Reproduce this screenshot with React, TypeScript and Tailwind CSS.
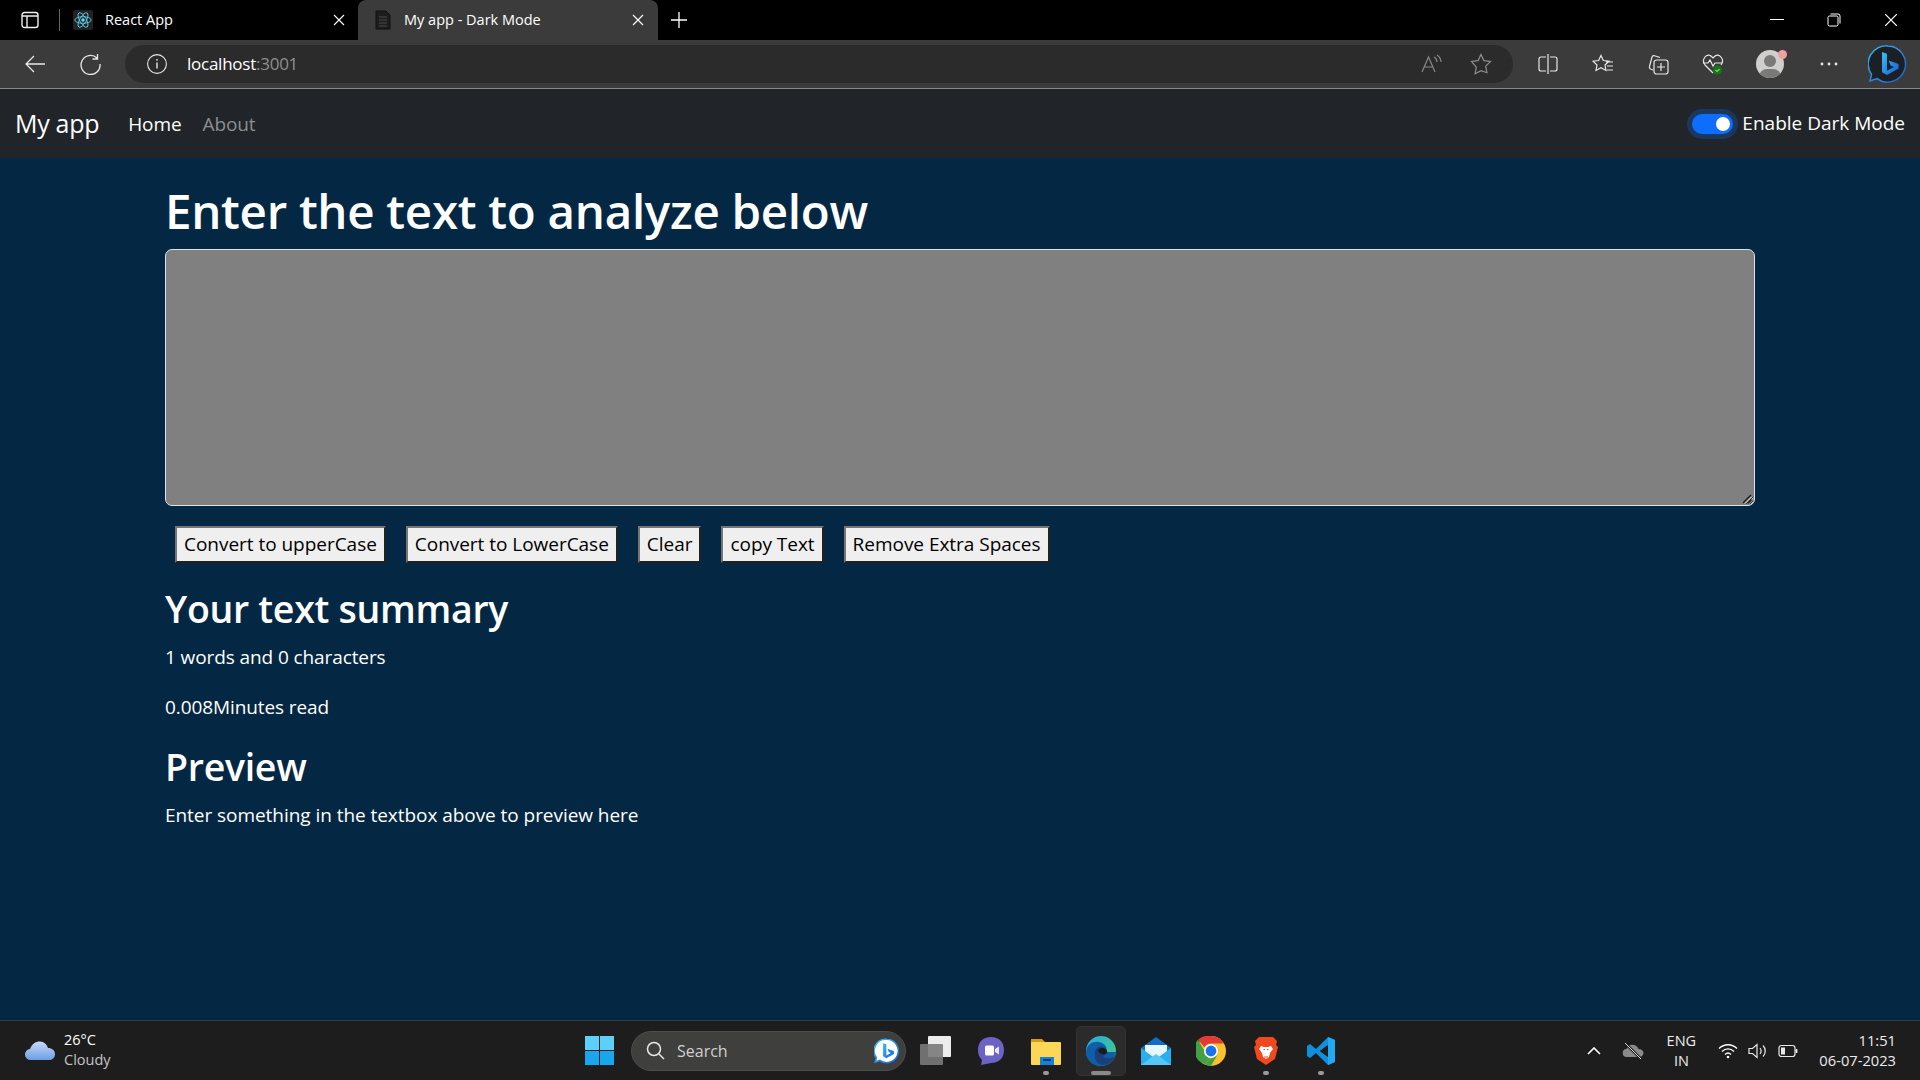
import React from 'react';

const font = "font-['Open_Sans','Noto_Sans',sans-serif]";

const CloseIcon = ({ size = 12 }: { size?: number }) => (
  <svg width={size} height={size} viewBox="0 0 12 12" stroke="#fff" strokeWidth="1.1" fill="none">
    <path d="M1 1l10 10M11 1L1 11" />
  </svg>
);

const ReactFavicon = () => (
  <div className="w-5 h-5 bg-[#222] rounded-[2px] flex items-center justify-center">
    <svg width="20" height="20" viewBox="-11 -11 22 22" fill="none" stroke="#61dafb" strokeWidth="0.9">
      <circle r="1.9" fill="#61dafb" stroke="none" />
      <ellipse rx="9" ry="3.6" />
      <ellipse rx="9" ry="3.6" transform="rotate(60)" />
      <ellipse rx="9" ry="3.6" transform="rotate(120)" />
    </svg>
  </div>
);

const DocIcon = () => (
  <svg width="16" height="20" viewBox="0 0 16 20" fill="#1d1d1d" stroke="#111" strokeWidth="1">
    <path d="M1 1h10l4 4v14H1z" />
    <path d="M4 7h8M4 10h8M4 13h8M4 16h8" stroke="#4b4b4b" />
  </svg>
);

const Toolbar = ({ children, w, c = '#e6e6e6' }: { children: React.ReactNode; w: number; c?: string }) => (
  <div className="flex items-center justify-center shrink-0" style={{ width: w, color: c }}>
    {children}
  </div>
);

const BingLogo = ({ size = 40, light = false }: { size?: number; light?: boolean }) => (
  <svg width={size} height={size} viewBox="0 0 40 40" fill="none">
    <defs>
      <linearGradient id="bb" x1="0" y1="0" x2="1" y2="1">
        <stop offset="0" stopColor="#37bdf8" />
        <stop offset="1" stopColor="#1a5fd6" />
      </linearGradient>
    </defs>
    <path
      d="M20 2a18 18 0 1 1-11 32.6L2 37l1.6-6.5A18 18 0 0 1 20 2z"
      fill={light ? '#fff' : '#1c1f24'}
      stroke="url(#bb)"
      strokeWidth={light ? 2.5 : 1.4}
    />
    <path d="M14 8l5 1.8v17l6.8-3.9-3.2-1.5-2-5 10 3.500v4.600L19 31l-5-2.800z" fill="url(#bb)" />
  </svg>
);

const Teams = () => (
  <svg width="30" height="30" viewBox="0 0 30 30">
    <path d="M15 1c8 0 13 5 13 13 0 8-5 13-13 13l-10 2 1-5C3 21 2 18 2 14 2 6 7 1 15 1z" fill="#6d63c6" />
    <rect x="9" y="9.5" width="9" height="10" rx="1.5" fill="#fff" />
    <path d="M19 13l4-2.5v8L19 16z" fill="#e9e6ff" />
  </svg>
);

const Explorer = () => (
  <svg width="32" height="30" viewBox="0 0 32 30">
    <path d="M1 3h11l3 3v4H1z" fill="#d99a14" />
    <rect x="1" y="6" width="30" height="23" rx="1" fill="#fcd757" />
    <rect x="10" y="21" width="14" height="8" fill="#1681d8" />
    <rect x="13" y="23" width="8" height="2" fill="#063f78" />
  </svg>
);

const Edge = () => (
  <svg width="32" height="32" viewBox="0 0 32 32">
    <defs>
      <linearGradient id="eg" x1="0" y1="0" x2="1" y2="1">
        <stop offset="0" stopColor="#2aa9e0" />
        <stop offset="1" stopColor="#43d27a" />
      </linearGradient>
    </defs>
    <circle cx="16" cy="16" r="15" fill="url(#eg)" />
    <path d="M1 17C2 8 9 6 14 7c6 1 9 6 7 10h10c-1 8-7 14-15 14C8 31 1 25 1 17z" fill="#0f5fa8" />
    <path d="M10 18c0-5 4-7 8-6s5 5 3 7-3 2-3 2c3 3 8 3 12 0-2 6-7 9-12 9-6 0-9-6-8-12z" fill="#1b3f7a" />
    <path d="M14 14c3-2 7-1 8 2 1 2-2 4-5 3-3-1-5-3-3-5z" fill="#1a1a1a" />
  </svg>
);

const Mail = () => (
  <svg width="30" height="30" viewBox="0 0 30 30">
    <path d="M15 1L0 12v17h30V12z" fill="#0f6fc6" />
    <path d="M4 9h22v12H4z" fill="#e8f6ff" />
    <path d="M0 12l15 11 15-11v17H0z" fill="#29b0ec" />
    <path d="M0 29l15-11 15 11z" fill="#57c8f5" />
  </svg>
);

const Chrome = () => (
  <svg width="30" height="30" viewBox="0 0 30 30">
    <circle cx="15" cy="15" r="15" fill="#fbc02d" />
    <path d="M15 0a15 15 0 0 1 13 7.5H15a7.5 7.5 0 0 0-6.5 3.75L2 3.8A15 15 0 0 1 15 0z" fill="#e53935" />
    <path d="M2 3.8l6.5 11.2A7.5 7.5 0 0 0 15 22.5L8.5 28.1A15 15 0 0 1 2 3.8z" fill="#43a047" />
    <path d="M8.5 28.1L15 22.5l6.5-3.75L15 30a15 15 0 0 1-6.5-1.9z" fill="#43a047" />
    <circle cx="15" cy="15" r="7" fill="#fff" />
    <circle cx="15" cy="15" r="5.4" fill="#1a73e8" />
  </svg>
);

const Brave = () => (
  <svg width="26" height="30" viewBox="0 0 26 30">
    <path d="M6 1h14l4 4-1 4 2 2-3 12-9 6-9-6L1 11l2-2-1-4z" fill="#f1491f" />
    <path d="M8 10l3 1h4l3-1 2 3-3 4-1 4-3 2-3-2-1-4-3-4z" fill="#fff" />
    <path d="M10.5 13.5h1.5M14 13.5h1.5M11 21h4" stroke="#f1491f" strokeWidth="1.2" />
  </svg>
);

const VSCode = () => (
  <svg width="30" height="30" viewBox="0 0 30 30">
    <path d="M22 1L10 13 4 8 1 10v10l3 2 6-5 12 12 7-3V4zM22 9v12l-8-6z" fill="#0f8fdc" fillRule="evenodd" />
    <path d="M22 1l7 3v22l-7 3z" fill="#23a9f2" />
    <path d="M22 9v12l-8-6z" fill="#1c1c1c" />
  </svg>
);

const TaskSlot = ({ children, dot }: { children: React.ReactNode; dot?: boolean }) => (
  <div className="relative w-[55px] h-full flex items-center justify-center shrink-0">
    {children}
    {dot && <span className="absolute bottom-[5px] w-[6px] h-[4px] rounded-full bg-[#9a9a9a]" />}
  </div>
);

export default function App() {
  const btn =
    "h-[37px] px-[7px] bg-[#efefef] text-black text-[19px] tracking-[-0.03px] border-2 [border-style:outset] border-[#767676] leading-none whitespace-nowrap shrink-0";
  return (
    <div className={`w-[1920px] h-[1080px] overflow-hidden flex flex-col bg-[#042743] ${font}`}>
      {/* tabs */}
      <div className="h-10 bg-black flex items-end shrink-0 text-white">
        <div className="w-[59px] h-10 flex items-center justify-center shrink-0">
          <svg width="18" height="18" viewBox="0 0 18 18" fill="none" stroke="#eee" strokeWidth="1.4">
            <rect x="1" y="1.5" width="16" height="15" rx="2.5" />
            <path d="M1 5h16M6 5v11" />
          </svg>
        </div>
        <div className="w-px h-[22px] bg-[#666] mb-[9px] shrink-0" />
        <div className="w-[298px] h-10 flex items-center pl-[13px] pr-[13px] shrink-0">
          <ReactFavicon />
          <span className="ml-3 text-[14.5px] leading-[20px] mb-[1px]">React App</span>
          <span className="ml-auto"><CloseIcon /></span>
        </div>
        <div className="w-[300px] h-10 bg-[#3b3b3b] rounded-t-lg flex items-center pl-[17px] pr-[14px] shrink-0">
          <DocIcon />
          <span className="ml-[13px] text-[14.5px] leading-[20px] mb-[1px]">My app - Dark Mode</span>
          <span className="ml-auto"><CloseIcon /></span>
        </div>
        <div className="h-10 w-[42px] flex items-center justify-center shrink-0">
          <svg width="18" height="18" viewBox="0 0 18 18" stroke="#fff" strokeWidth="1.3"><path d="M9 1v16M1 9h16" /></svg>
        </div>
        <div className="ml-auto h-10 flex items-center">
          <div className="w-[57px] flex justify-center">
            <svg width="14" height="14" viewBox="0 0 14 14" stroke="#fff" strokeWidth="1"><path d="M0 6.5h14" /></svg>
          </div>
          <div className="w-[57px] flex justify-center">
            <svg width="14" height="14" viewBox="0 0 14 14" fill="none" stroke="#fff" strokeWidth="1">
              <rect x="1" y="3" width="10" height="10" rx="1.5" />
              <path d="M3.5 1H11a2 2 0 0 1 2 2v7.5" />
            </svg>
          </div>
          <div className="w-[58px] flex justify-center">
            <CloseIcon size={14} />
          </div>
        </div>
      </div>

      {/* address bar */}
      <div className="h-[49px] bg-[#3b3b3b] border-b border-[#8a8a8a] flex items-center shrink-0 pb-px">
        <Toolbar w={69}>
          <svg width="22" height="20" viewBox="0 0 22 20" fill="none" stroke="#e8e8e8" strokeWidth="1.3"><path d="M21 10H2M10 2l-8 8 8 8" /></svg>
        </Toolbar>
        <Toolbar w={42}>
          <svg width="22" height="22" viewBox="0 0 22 22" fill="none" stroke="#e8e8e8" strokeWidth="1.3"><path d="M18 5a9.5 9.5 0 1 0 3 6M18.5 1v5h-5" /></svg>
        </Toolbar>
        <div className="ml-[14px] w-[1388px] h-[38px] rounded-full bg-[#2b2b2b] flex items-center shrink-0">
          <div className="w-[62px] flex justify-center pl-[2px]">
            <svg width="20" height="20" viewBox="0 0 20 20" fill="none" stroke="#e8e8e8" strokeWidth="1.1">
              <circle cx="10" cy="10" r="9.4" />
              <path d="M10 8.5v6" strokeWidth="1.4" />
              <circle cx="10" cy="5.8" r="0.9" fill="#e8e8e8" stroke="none" />
            </svg>
          </div>
          <span className="text-[17px] tracking-[-0.25px] text-white">localhost<span className="text-[#8f8f8f]">:3001</span></span>
          <div className="ml-auto flex items-center pr-[8px]">
            <Toolbar w={49}>
              <svg width="22" height="20" viewBox="0 0 22 20" fill="none" stroke="#8a8a8a" strokeWidth="1.2">
                <path d="M1 18L7.5 3 14 18M3.4 13h8.4M13 3a6 6 0 0 1 3 5M16 1a9 9 0 0 1 4 7" />
              </svg>
            </Toolbar>
            <Toolbar w={49}>
              <svg width="22" height="22" viewBox="0 0 22 22" fill="none" stroke="#8f8f8f" strokeWidth="1.2">
                <path d="M11 1.5l2.9 6.1 6.6.9-4.8 4.6 1.2 6.6L11 17.6l-5.9 3.1 1.2-6.6L1.5 8.5l6.6-.9z" />
              </svg>
            </Toolbar>
          </div>
        </div>
        <Toolbar w={70}>
          <svg width="20" height="20" viewBox="0 0 20 20" fill="none" stroke="#e8e8e8" strokeWidth="1.2">
            <path d="M8 3H3a2 2 0 0 0-2 2v10a2 2 0 0 0 2 2h5M12 3h5a2 2 0 0 1 2 2v10a2 2 0 0 1-2 2h-5M10 0v20" />
          </svg>
        </Toolbar>
        <Toolbar w={40}>
          <svg width="22" height="20" viewBox="0 0 22 20" fill="none" stroke="#e8e8e8" strokeWidth="1.2">
            <path d="M9 1.5l2.4 5 5.6.7-4 3.800 1 5.500-5-2.700-5 2.700 1-5.500-4-3.800 5.600-.7zM14 8h7M15 12h6M15 16h6" />
          </svg>
        </Toolbar>
        <Toolbar w={70}>
          <svg width="22" height="22" viewBox="0 0 22 22" fill="none" stroke="#e8e8e8" strokeWidth="1.2">
            <path d="M6 17l-2.500-1a2 2 0 0 1-1-2.500L5 4a2 2 0 0 1 2.500-1.200L13 4.500" />
            <rect x="7" y="7" width="14" height="14" rx="2.500" />
            <path d="M14 10v8M10 14h8" />
          </svg>
        </Toolbar>
        <Toolbar w={40}>
          <svg width="22" height="22" viewBox="0 0 22 22" fill="none">
            <path d="M11 20L3 12C-1 7 4 0 9 3l2 2 2-2c5-3 10 4 6 9" stroke="#e8e8e8" strokeWidth="1.200" />
            <path d="M1 10h5l2-3 3 6 2-3h7" stroke="#e8e8e8" strokeWidth="1.200" />
            <circle cx="15.500" cy="17" r="4.500" fill="#107c10" />
            <path d="M13.500 17l1.500 1.500 2.500-2.500" stroke="#fff" strokeWidth="0.900" />
          </svg>
        </Toolbar>
        <Toolbar w={74}>
          <div className="relative">
            <div className="relative w-7 h-7 rounded-full bg-[#d1cfcd] overflow-hidden">
              <div className="absolute left-[8px] top-[5px] w-3 h-3 rounded-full bg-[#7a7a78]" />
              <div className="absolute left-[3px] top-[19px] w-[22px] h-4 rounded-full bg-[#7a7a78]" />
            </div>
            <span className="absolute right-[-3px] top-0 w-[9px] h-[9px] rounded-full bg-[#f1a0a0]" />
          </div>
        </Toolbar>
        <Toolbar w={43}>
          <svg width="18" height="4" viewBox="0 0 18 4" fill="#e8e8e8">
            <circle cx="2" cy="2" r="1.400" /><circle cx="9" cy="2" r="1.400" /><circle cx="16" cy="2" r="1.400" />
          </svg>
        </Toolbar>
        <Toolbar w={75}>
          <BingLogo />
        </Toolbar>
      </div>

      {/* navbar */}
      <nav className="h-[69px] bg-[#212529] flex items-center pl-[15px] pr-[15px] shrink-0 text-white">
        <span className="text-[25px] tracking-[-0.3px]">My app</span>
        <span className="ml-[29px] text-[19px] tracking-[-0.1px] mt-[2px]">Home</span>
        <span className="ml-[21px] text-[19px] tracking-[-0.1px] text-[#8c8e90] mt-[2px]">About</span>
        <div className="ml-auto flex items-center">
          <div className="w-[41px] h-5 rounded-full bg-[#0d6efd] flex items-center justify-end pr-[3px] shadow-[0_0_0_5px_#0d6efd40]">
            <span className="w-[14px] h-[14px] rounded-full bg-white" />
          </div>
          <span className="ml-[9px] text-[19px]">Enable Dark Mode</span>
        </div>
      </nav>

      {/* page */}
      <main className="flex-1 px-[165px] text-white">
        <h1 className="text-[47.5px] font-semibold leading-[60px] mt-[23px] tracking-[-0.3px]">Enter the text to analyze below</h1>
        <div className="relative mt-[8px]">
          <textarea
            readOnly
            className="block w-full h-[257px] bg-[#808080] border border-[#dee2e6] rounded-[7px] resize outline-none"
          />
          {/* resize grip */}
          <svg className="absolute right-[3px] bottom-[2px] pointer-events-none" width="10" height="10" viewBox="0 0 10 10" fill="none">
            <path d="M1 9l8-8" stroke="#1c1c1c" strokeWidth="1.400" />
            <path d="M3 9.500l6.500-6.500" stroke="#e8e8e8" strokeWidth="1" />
            <path d="M5.500 9.500l4-4" stroke="#1c1c1c" strokeWidth="1.200" />
          </svg>
        </div>
        <div className="flex gap-[20px] pl-[10px] mt-[20px]">
          <button className={btn}>Convert to upperCase</button>
          <button className={btn}>Convert to LowerCase</button>
          <button className={btn}>Clear</button>
          <button className={btn}>copy Text</button>
          <button className={btn}>Remove Extra Spaces</button>
        </div>
        <h2 className="text-[37.5px] font-semibold leading-[48px] mt-[22px] tracking-[-0.3px]">Your text summary</h2>
        <p className="text-[19px] leading-[30px] mt-[9px] tracking-[-0.1px]">1 words and 0 characters</p>
        <p className="text-[19px] leading-[30px] mt-[20px] tracking-[-0.1px]">0.008Minutes read</p>
        <h2 className="text-[37.5px] font-semibold leading-[48px] mt-[21px] tracking-[-0.3px]">Preview</h2>
        <p className="text-[19px] leading-[30px] mt-[9px] tracking-[-0.05px]">Enter something in the textbox above to preview here</p>
      </main>

      {/* taskbar */}
      <div className="h-[60px] bg-[#1d1d1d] border-t border-[#3a3a3a] flex items-center shrink-0 text-white">
        <div className="w-[585px] shrink-0 flex items-center pl-[25px]">
          <svg width="31" height="20" viewBox="0 0 31 20">
            <defs>
              <linearGradient id="cl" x1="0" y1="0" x2="0" y2="1">
                <stop offset="0" stopColor="#c5daf7" />
                <stop offset="1" stopColor="#6d9de6" />
              </linearGradient>
            </defs>
            <path d="M6 19a5.500 5.500 0 0 1-1-11C7 3 10 .5 15 .5c4 0 7 3 8 6.500 4 0 7 2.500 7 6 0 4-3 6-6 6z" fill="url(#cl)" />
          </svg>
          <div className="ml-[8px] text-[14.5px] leading-[20px] mb-[2px]">
            <div>26°C</div>
            <div className="text-[#c4c4c4]">Cloudy</div>
          </div>
        </div>
        <div className="grid grid-cols-2 gap-[1.500px] w-[29px] h-[29px] shrink-0">
          <span className="bg-[#5dd0f8]" /><span className="bg-[#5dd0f8]" />
          <span className="bg-[#18a6ee]" /><span className="bg-[#18a6ee]" />
        </div>
        <div className="ml-[17px] w-[275px] h-10 rounded-full bg-[#3f3f3d] border border-[#4d4d4b] flex items-center pl-[14px] pr-[5px] shrink-0">
          <svg width="19" height="19" viewBox="0 0 19 19" fill="none" stroke="#e8e8e8" strokeWidth="1.500">
            <circle cx="8" cy="8" r="6.500" /><path d="M13 13l5 5" />
          </svg>
          <span className="ml-[12px] text-[16px] text-[#cfcfcf]">Search</span>
          <span className="ml-auto"><BingLogo size={26} light /></span>
        </div>
        <div className="ml-[2px] h-full flex items-center">
          <TaskSlot>
            <div className="relative w-[31px] h-[29px]">
              <span className="absolute right-0 top-0 w-[23px] h-[21px] bg-[#ececec] rounded-[1px]" />
              <span className="absolute left-0 bottom-0 w-[23px] h-[21px] bg-[#7a7a7a]/90 rounded-[1px]" />
            </div>
          </TaskSlot>
          <TaskSlot><Teams /></TaskSlot>
          <TaskSlot dot><Explorer /></TaskSlot>
          <div className="relative w-[55px] h-full flex items-center justify-center shrink-0">
            <div className="absolute w-[50px] h-[50px] rounded-[5px] bg-[#2b2b2b] border border-[#333]" />
            <span className="relative"><Edge /></span>
            <span className="absolute bottom-[5px] w-[20px] h-[4px] rounded-full bg-[#8a8a8a]" />
          </div>
          <TaskSlot><Mail /></TaskSlot>
          <TaskSlot><Chrome /></TaskSlot>
          <TaskSlot dot><Brave /></TaskSlot>
          <TaskSlot dot><VSCode /></TaskSlot>
        </div>
        <div className="ml-auto flex items-center pr-[24px]">
          <svg width="14" height="8" viewBox="0 0 14 8" fill="none" stroke="#fff" strokeWidth="1.600"><path d="M1 7l6-6 6 6" /></svg>
          <svg className="ml-[21px]" width="22" height="18" viewBox="0 0 22 18">
            <path d="M5 15a4 4 0 0 1-.500-8C6 3 9 2 12 3c2 .500 4 2 4.500 4 3 0 5 2 5 4s-2 4-4 4z" fill="#8a8a8a" />
            <path d="M3 1l16 16" stroke="#1d1d1d" strokeWidth="2.500" />
            <path d="M3 1l16 16" stroke="#e0e0e0" strokeWidth="1" />
          </svg>
          <div className="ml-[22px] w-[30px] text-center text-[14.5px] leading-[20px] text-[#ececec]">
            <div>ENG</div><div>IN</div>
          </div>
          <svg className="ml-[22px]" width="20" height="16" viewBox="0 0 20 16" fill="none" stroke="#fff" strokeWidth="1.300">
            <path d="M1 5.500c5-5 13-5 18 0M4 8.500c3.500-3.500 8.500-3.500 12 0M7 11.500c2-2 4-2 6 0" />
            <circle cx="10" cy="14" r="1.300" fill="#fff" stroke="none" />
          </svg>
          <svg className="ml-[10px]" width="20" height="18" viewBox="0 0 20 18" fill="none" stroke="#e8e8e8" strokeWidth="1.200">
            <path d="M1 6.500h3.500L9 2.500v13l-4.500-4H1zM12 6c1.500 2 1.500 4 0 6M15 3.500c3 3 3 8 0 11" />
          </svg>
          <svg className="ml-[10px]" width="20" height="14" viewBox="0 0 20 14" fill="none" stroke="#e8e8e8" strokeWidth="1.200">
            <rect x="1" y="1.500" width="16" height="11" rx="2.500" />
            <rect x="3" y="3.500" width="4" height="7" fill="#e8e8e8" stroke="none" />
            <path d="M18.500 5v4" strokeWidth="1.800" />
          </svg>
          <div className="ml-[21px] text-right text-[14.7px] leading-[20px] mb-[2px] text-[#ececec]">
            <div>11:51</div><div>06-07-2023</div>
          </div>
        </div>
      </div>
    </div>
  );
}
